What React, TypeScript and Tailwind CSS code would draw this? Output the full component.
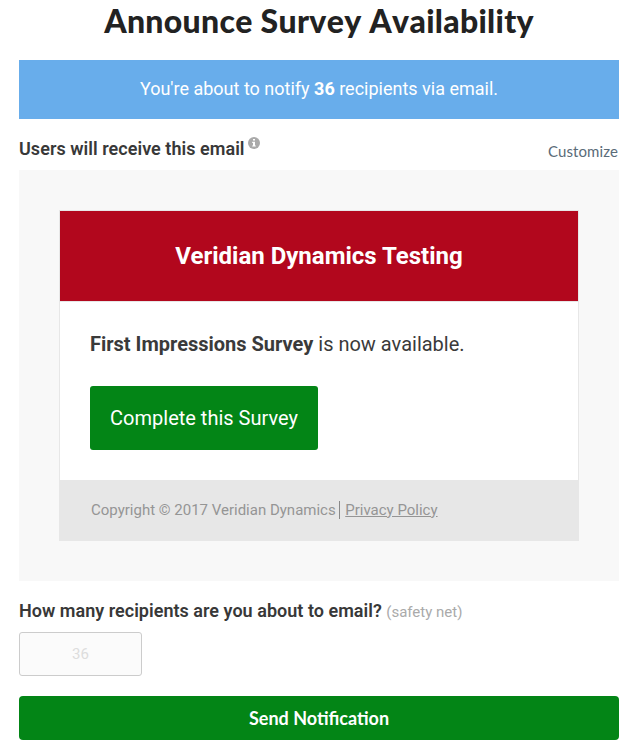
import React from 'react';

const InfoIcon: React.FC = () => (
  <svg viewBox="0 0 12 12" className="h-3 w-3" aria-hidden="true">
    <circle cx="6" cy="6" r="6" fill="#aaaaaa" />
    <path d="M5 2h2v1.6H5zM4.2 4.7H7v3.7h.8v1.2H4.2V8.4H5V5.9h-.8z" fill="#ffffff" />
  </svg>
);

const EmailPreview: React.FC = () => (
  <div className="mt-[10px] h-[411px] bg-[#f8f8f8] px-10 pt-10">
    <div className="h-[331px] border border-[#e7e7e7] bg-white">
      <div className="flex h-[90px] items-center justify-center bg-[#b2071d] text-2xl font-bold text-white">
        Veridian Dynamics Testing
      </div>
      <div className="h-[179px] border-t border-[#e7e7e7] px-[30px] pt-[27px]">
        <p className="text-xl leading-[30px] text-[#3a3a3a]">
          <strong>First Impressions Survey</strong> is now available.
        </p>
        <button className="mt-[27px] h-16 w-[228px] rounded-[3px] bg-[#038516] text-xl text-white">
          Complete this Survey
        </button>
      </div>
      <div className="flex h-[60px] items-center bg-[#e7e7e7] pl-[31px] text-[15px] text-[#959595]">
        <span>Copyright © 2017 Veridian Dynamics</span>
        <span className="ml-[3px] mr-[5.5px] h-[18px] w-px bg-[#888888]" />
        <a className="underline">Privacy Policy</a>
      </div>
    </div>
  </div>
);

const App: React.FC = () => (
  <div className="h-[744px] overflow-hidden bg-white pl-[19px] pr-[10px] font-['Roboto',sans-serif] text-[#383838]">
    <h1 className="h-[60px] text-center font-['Lato',sans-serif] text-[32px] font-black leading-[42px] tracking-[0.3px] text-[#222222] [font-kerning:none]">
      Announce Survey Availability
    </h1>
    <div className="flex h-[59px] items-center justify-center bg-[#68adeb] pb-0.5 text-lg text-white">
      <p>
        You're about to notify <strong>36</strong> recipients via email.
      </p>
    </div>
    <div className="flex h-[41px] justify-between">
      <div className="flex pt-[18px]">
        <h2 className="text-lg font-semibold leading-6 tracking-[0.04px]">Users will receive this email</h2>
        <span className="ml-[3px]">
          <InfoIcon />
        </span>
      </div>
      <a className="pr-px pt-5 font-['Lato',sans-serif] text-[15px] leading-6 tracking-[0.1px] text-[#5a6b78]">
        Customize
      </a>
    </div>
    <EmailPreview />
    <label htmlFor="recipient-count" className="mt-[18px] block text-lg font-semibold leading-6 tracking-[0.025px]">
      How many recipients are you about to email?{' '}
      <span className="text-[15px] font-normal tracking-normal text-[#aaaaaa]">(safety net)</span>
    </label>
    <input
      id="recipient-count"
      placeholder="36"
      className="mt-2 block h-11 w-[123px] rounded-[3px] border border-[#cccccc] bg-[#fbfbfb] text-center text-[15px] placeholder:text-[#dddddd]"
    />
    <button className="mt-5 h-11 w-full rounded-[4px] bg-[#038516] font-['Lato',sans-serif] text-lg font-bold text-white">
      Send Notification
    </button>
  </div>
);

export default App;
